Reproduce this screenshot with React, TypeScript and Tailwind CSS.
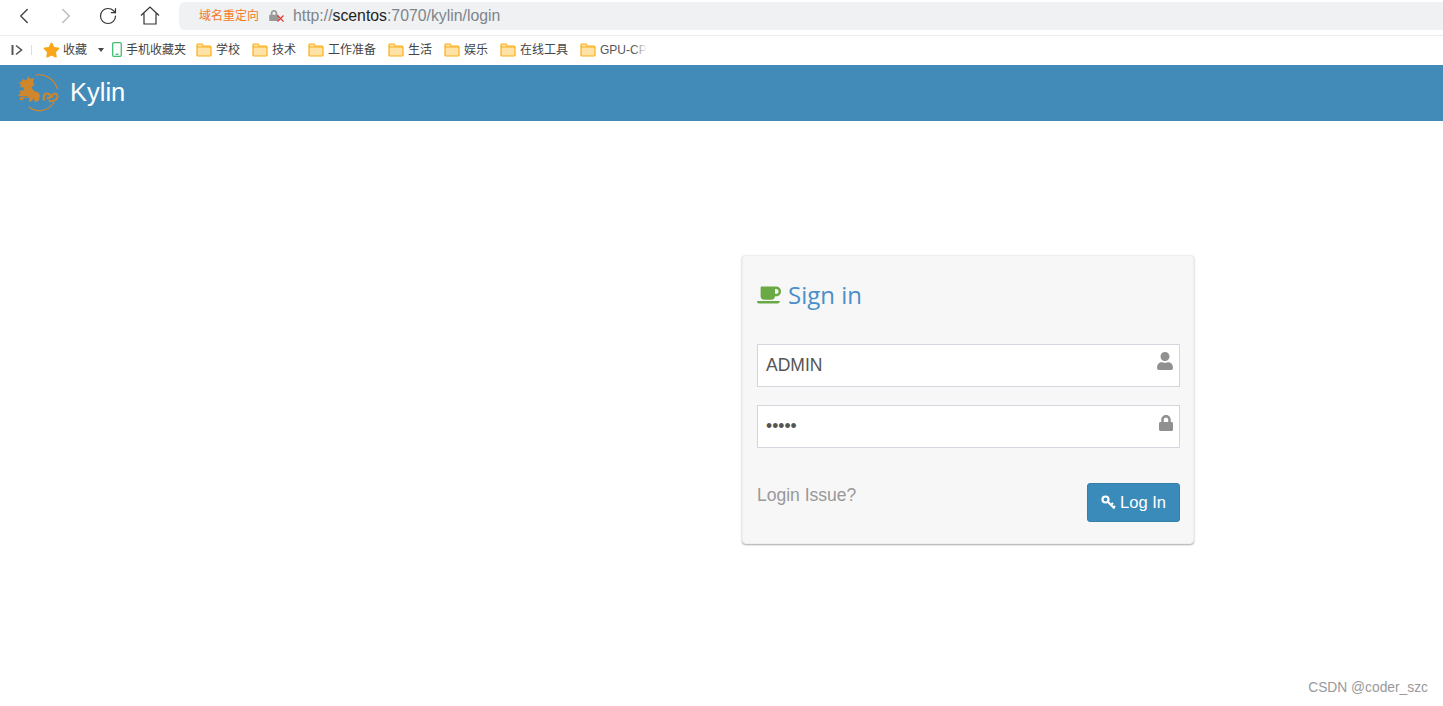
import React from 'react';
import { ChevronLeft, ChevronRight, RotateCw } from 'lucide-react';
import { FaCoffee, FaLock, FaStar, FaUser } from 'react-icons/fa';

const cjk = "font-['Liberation_Sans','Noto_Sans_CJK_SC',sans-serif]";

const folders = [
  { label: '学校', width: 'w-[56px]' },
  { label: '技术', width: 'w-[56px]' },
  { label: '工作准备', width: 'w-[80px]' },
  { label: '生活', width: 'w-[56px]' },
  { label: '娱乐', width: 'w-[56px]' },
  { label: '在线工具', width: 'w-[80px]' },
];

const FolderIcon = () => (
  <svg width="16" height="14" viewBox="0 0 16 14" className="shrink-0">
    <path d="M1 12.5V2a1 1 0 0 1 1-1h4l1.5 2H14a1 1 0 0 1 1 1v8.5a.5.5 0 0 1-.5.5h-13a.5.5 0 0 1-.5-.5z" fill="#ffe3a6" stroke="#fbae19" strokeWidth="1.2" />
    <path d="M1 4h14" stroke="#fbae19" strokeWidth="1" />
  </svg>
);

// rough trace of the kylin mark: dragon on the left, two scrolls, open ring
const KylinLogo = () => (
  <svg width="44" height="40" viewBox="0 0 44 40" className="shrink-0">
    <g fill="none" stroke="#d0862a" strokeLinecap="round">
      <path d="M20 2C30 0.500 39 7 41.500 16" strokeWidth="1.200" />
      <path d="M13 34C20 40 33 38.500 38 29" strokeWidth="1.200" />
      <path d="M28 27c-1.500-5 2-7.500 5-6 2.500 1.500 1 5-1.500 4" strokeWidth="2" />
      <path d="M36 24c0-4 5-4.500 5.500-1 .3 3.500-4 5.500-8 5" strokeWidth="1.800" />
    </g>
    <path d="M7 6l3 1.500L13 3l1 3 4-1-1 4 1.500 3-3 2 1.500 3 3 2 3 .5 1 3.500-1.500 5-3.500 1-1.500-4-2 3.500h-3l1-4-6 .5-1 3-3-1 1-3-2.500-1.500 2.500-2-1-2.500 5-1-1.500-3-3 .5 1-3-2.500-1.500 3-1.500z" fill="#d0862a" />
    <path d="M2 23.500h10M3 27.500h10" stroke="#428bb9" strokeWidth=".8" />
  </svg>
);

const KeyIcon = () => (
  <svg width="15" height="15" viewBox="0 0 15 15" fill="none" stroke="#fff" className="shrink-0">
    <circle cx="4.500" cy="4.500" r="3" strokeWidth="2.200" />
    <path d="M7 7l6.500 6.500M10 10l2-2M12.500 12.500l1.500-1.500" strokeWidth="2" />
  </svg>
);

const App: React.FC = () => {
  return (
    <div className="min-h-[706px] bg-white font-['Liberation_Sans',sans-serif] relative">
      {/* browser toolbar */}
      <div className="h-[36px] pb-[4px] flex items-center border-b border-[#ececec] text-[#333]">
        <ChevronLeft className="w-[26px] h-[26px] ml-[11px] text-[#444]" strokeWidth={1.3} />
        <ChevronRight className="w-[26px] h-[26px] ml-[16px] text-[#bbb]" strokeWidth={1.3} />
        <RotateCw className="w-[20px] h-[20px] ml-[19px] text-[#333]" strokeWidth={1.4} />
        <svg width="20" height="19" viewBox="0 0 20 19" className="ml-[22px]" fill="none" stroke="#333" strokeWidth="1.2">
          <path d="M1 9.5L10 1l9 8.5M4 7.5V18h12V7.5" />
        </svg>
        <div className="ml-[19px] flex-1 h-[28px] bg-[#eff1f3] rounded-l-[6px] flex items-center pl-[20px]">
          <span className={`${cjk} text-[12px] text-[#f6781f] w-[70px] shrink-0`}>域名重定向</span>
          <span className="relative w-[15px] h-[12px] shrink-0">
            <FaLock className="w-[10px] h-[11px] text-[#999] absolute left-0 top-0" />
            <svg width="7" height="7" viewBox="0 0 7 7" className="absolute right-0 bottom-0" stroke="#e0352b" strokeWidth="1.1">
              <path d="M.5.5l6 6M6.500.5l-6 6" />
            </svg>
          </span>
          <span className="ml-[9px] text-[15.8px] text-[#80858c]">
            http://<span className="text-[#222]">scentos</span>:7070/kylin/login
          </span>
        </div>
      </div>

      {/* bookmarks bar */}
      <div className={`h-[29px] pb-[2px] flex items-center text-[12px] text-[#444] ${cjk}`}>
        <svg width="12" height="12" viewBox="0 0 12 12" className="ml-[11px]">
          <path d="M1.500 1v10" stroke="#555" strokeWidth="2" />
          <path d="M5 1.500L10.500 6 5 10.500" stroke="#555" strokeWidth="1.600" fill="none" />
        </svg>
        <span className="ml-[8px] w-px h-[10px] bg-[#ddd]" />
        <FaStar className="ml-[11px] w-[17px] h-[16px] text-[#f9a61a]" />
        <span className="ml-[3px] w-[35px]">收藏</span>
        <span className="w-0 h-0 border-x-[3px] border-x-transparent border-t-[4px] border-t-[#444]" />
        <svg width="10" height="15" viewBox="0 0 10 15" className="ml-[8px]" fill="none">
          <rect x=".7" y=".7" width="8.600" height="13.600" rx="1.200" stroke="#3fbf6f" strokeWidth="1.300" />
          <path d="M3.500 12.300h3" stroke="#3fbf6f" strokeWidth="1.300" />
        </svg>
        <span className="ml-[4px] w-[70px]">手机收藏夹</span>
        {folders.map((folder) => (
          <span key={folder.label} className={`flex items-center gap-[4px] shrink-0 ${folder.width}`}>
            <FolderIcon />
            {folder.label}
          </span>
        ))}
        <span className="flex items-center gap-[4px]">
          <FolderIcon />
          <span className="relative whitespace-nowrap text-[#555]">
            GPU-CP
            <span className="absolute right-0 top-0 bottom-0 w-[14px] bg-gradient-to-r from-transparent to-white" />
          </span>
        </span>
      </div>

      {/* kylin header */}
      <header className="h-[56px] bg-[#428bb9] flex items-center pl-[16px]">
        <KylinLogo />
        <span className="ml-[10px] mb-[2px] text-[25.5px] text-white">Kylin</span>
      </header>

      {/* login box */}
      <div className="pt-[134px] pl-[742px]">
        <div className="w-[452px] h-[289px] bg-[#f7f7f7] rounded-[4px] border border-[#f0f0f0] shadow-[0_1px_2px_rgba(0,0,0,0.35)] pl-[14px] pr-[13px]">
          <div className="h-[88px] pb-[11px] flex items-center">
            <FaCoffee className="w-[24px] h-[22px] text-[#69aa46]" />
            <h3 className="ml-[7px] text-[24px] text-[#4a8fc7] font-['Open_Sans',sans-serif]">Sign in</h3>
          </div>
          <div className="relative">
            <input
              type="text"
              readOnly
              value="ADMIN"
              className="w-full h-[43px] bg-white border border-[#d5d5e0] px-[8px] text-[17.5px] text-[#555] outline-none"
            />
            <FaUser className="absolute right-[7px] top-[8px] w-[16px] h-[18px] text-[#909090]" />
          </div>
          <div className="relative mt-[18px]">
            <input
              type="password"
              readOnly
              value="admin"
              className="w-full h-[43px] bg-white border border-[#d5d5e0] px-[8px] text-[17.5px] text-[#555] outline-none"
            />
            <FaLock className="absolute right-[7px] top-[10px] w-[14px] h-[16px] text-[#909090]" />
          </div>
          <div className="flex justify-between mt-[35px]">
            <a className="text-[17.5px] leading-[24px] text-[#999]">Login Issue?</a>
            <button className="w-[93px] h-[39px] bg-[#3a8bba] border border-[#367fa9] rounded-[3px] text-white text-[16.5px] flex items-center justify-center gap-[4px]">
              <KeyIcon />
              Log In
            </button>
          </div>
        </div>
      </div>

      <span className="absolute right-[15px] bottom-[7px] text-[13.8px] text-[#999]">CSDN @coder_szc</span>
    </div>
  );
};

export default App;
